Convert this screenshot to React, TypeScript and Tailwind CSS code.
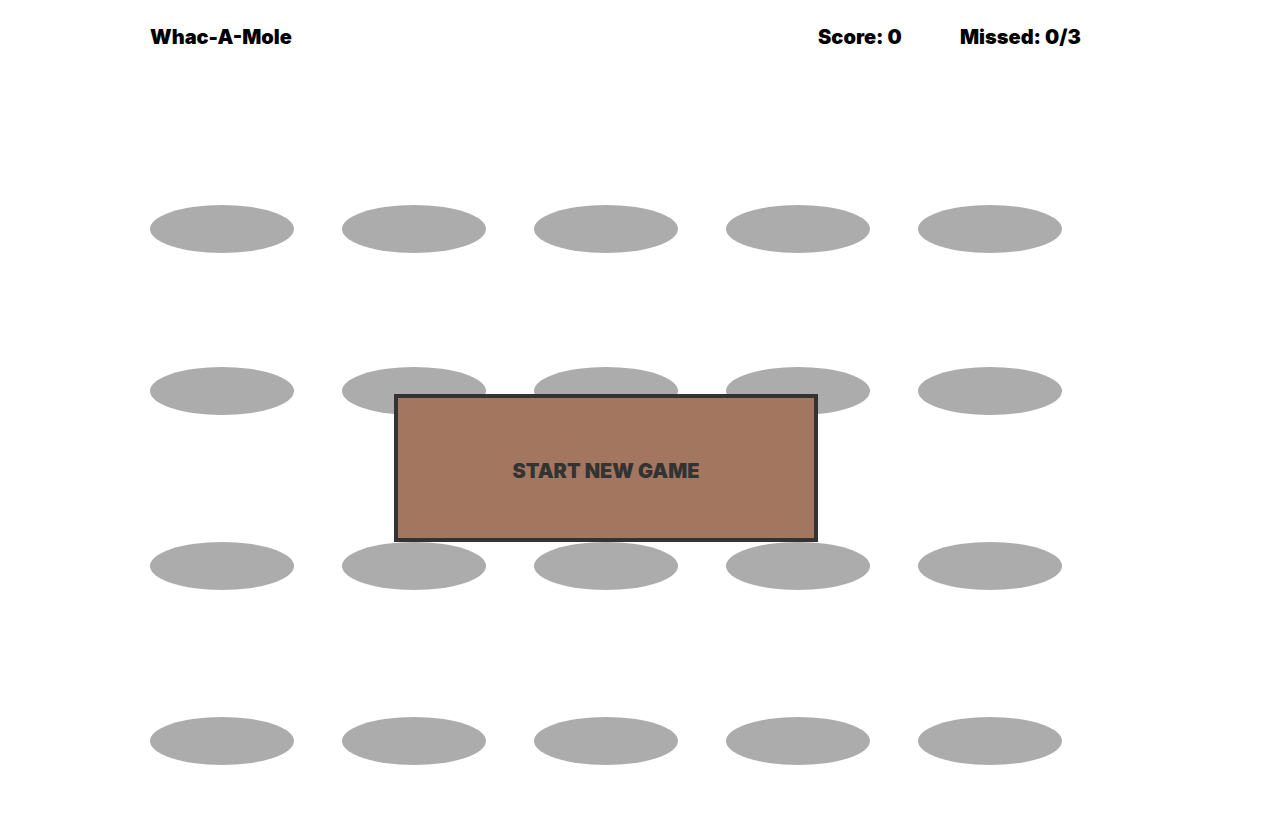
const ROWS = [0, 1, 2, 3];

function Hole() {
  return <div className="h-[48px] w-[144px] rounded-[50%] bg-[#acacac]" />;
}

export default function App() {
  return (
    <div className="relative min-h-[832px] w-full bg-white font-['Inter',_'Liberation_Sans',_sans-serif] text-black">
      <header className="flex h-[74px] items-center pl-[150px] text-[20px] font-black">
        <h1 className="w-[668px]">Whac-A-Mole</h1>
        <span className="w-[142px]">Score: 0</span>
        <span>Missed: 0/3</span>
      </header>

      <div className="flex flex-col pl-[150px] pt-[131px]">
        {ROWS.map((i) => (
          <div
            key={i}
            className={
              i === 0 ? "flex gap-[48px]" : i === 1 ? "mt-[114px] flex gap-[48px]" : "mt-[127px] flex gap-[48px]"
            }
          >
            {[0, 1, 2, 3, 4].map((j) => (
              <Hole key={j} />
            ))}
          </div>
        ))}
      </div>

      <button className="absolute left-[394px] top-[394px] flex h-[148px] w-[424px] items-center justify-center border-4 border-[#333333] bg-[#a3765f] pt-[6px] text-[20px] font-black text-[#333333]">
        START NEW GAME
      </button>
    </div>
  );
}
